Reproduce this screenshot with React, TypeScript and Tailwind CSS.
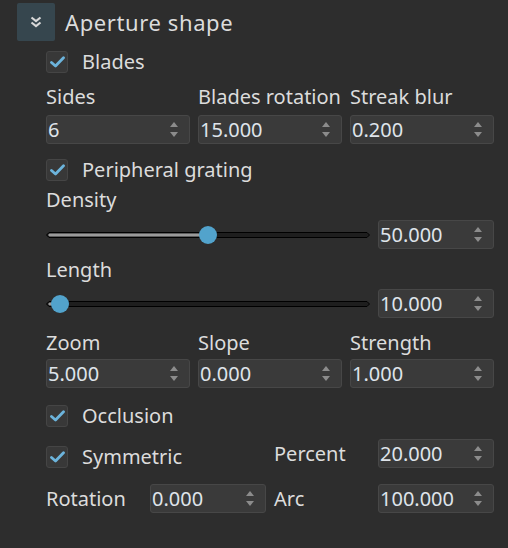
import React from "react";

const font = { fontFamily: '"Noto Sans", "Open Sans", sans-serif' };

function Spin({ value, w = "w-[144px]" }: { value: string; w?: string }) {
  return (
    <div
      className={`${w} h-[29px] shrink-0 rounded-[3px] border border-[#474747] bg-[#3a3a3a] flex items-center justify-between pl-[1px] pr-[11px]`}
    >
      <span className="text-[20px] leading-none text-[#dfe4ea]">{value}</span>
      <div className="flex flex-col items-center gap-[5px]">
        <svg width="8" height="5" viewBox="0 0 8 5">
          <path d="M4 0 L8 5 L0 5 Z" fill="#8c8c8c" />
        </svg>
        <svg width="8" height="5" viewBox="0 0 8 5">
          <path d="M0 0 L8 0 L4 5 Z" fill="#8c8c8c" />
        </svg>
      </div>
    </div>
  );
}

function Check({ label }: { label: string }) {
  return (
    <div className="flex items-center h-[22px]">
      <div className="w-[22px] h-[22px] rounded-[3px] border border-[#454545] bg-[#383838] flex items-center justify-center">
        <svg width="15" height="12" viewBox="0 0 15 12">
          <path d="M1.5 6.5 L5.5 10 L13.5 1.8" stroke="#6cb4dc" strokeWidth="2.8" fill="none" strokeLinecap="round" strokeLinejoin="round" />
        </svg>
      </div>
      <span className="ml-[14px] text-[20px] text-[#dcdcdc] leading-none">{label}</span>
    </div>
  );
}

function Slider({ pct }: { pct: number }) {
  const W = 324;
  const fillX = (W * pct) / 100;
  return (
    <div className="relative w-[324px] h-[20px] flex items-center">
      <svg width={W} height="8" viewBox={`0 0 ${W} 8`} className="block">
        <path
          d={`M0.5 4 L3 1.5 H${W - 3} L${W - 0.5} 4 L${W - 3} 6.5 H3 Z`}
          fill="#1e1e1e"
          stroke="#000000"
          strokeWidth="1"
        />
        <path d={`M2 4 L3.5 2.5 H${fillX} V5.5 H3.5 Z`} fill="#9a9a9a" />
      </svg>
      <div
        className="absolute top-[1px] w-[18px] h-[18px] rounded-full bg-[#52a3cc]"
        style={{ left: `${fillX - 9}px` }}
      />
    </div>
  );
}

function Label({ children }: { children: React.ReactNode }) {
  return <div className="text-[20px] leading-[24px] text-[#dcdcdc]">{children}</div>;
}

export default function App() {
  return (
    <div className="w-[508px] h-[548px] bg-[#2d2d2d] overflow-hidden" style={font}>
      <div className="pt-[3px] pl-[17px] flex items-center h-[41px]">
        <div className="w-[38px] h-[38px] rounded-[2px] bg-[#36464e] flex items-center justify-center">
          <svg width="12" height="12" viewBox="0 0 12 12">
            <path d="M1.5 1.5 L6 5 L10.5 1.5" stroke="#d8d8d8" strokeWidth="2.2" fill="none" />
            <path d="M1.5 6.5 L6 10 L10.5 6.5" stroke="#d8d8d8" strokeWidth="2.2" fill="none" />
          </svg>
        </div>
        <span className="ml-[10px] text-[22px] tracking-[0.6px] text-[#dcdcdc] leading-none">Aperture shape</span>
      </div>

      <div className="pl-[46px] flex flex-col">
        <div className="mt-[10px]">
          <Check label="Blades" />
        </div>
        <div className="mt-[12px] flex gap-[8px]">
          <div className="flex flex-col gap-[6px]">
            <Label>Sides</Label>
            <Spin value="6" />
          </div>
          <div className="flex flex-col gap-[6px]">
            <Label>Blades rotation</Label>
            <Spin value="15.000" />
          </div>
          <div className="flex flex-col gap-[6px]">
            <Label>Streak blur</Label>
            <Spin value="0.200" />
          </div>
        </div>

        <div className="mt-[15px]">
          <Check label="Peripheral grating" />
        </div>
        <div className="mt-[7px]">
          <Label>Density</Label>
        </div>
        <div className="mt-[8px] flex items-center gap-[8px]">
          <Slider pct={50} />
          <Spin value="50.000" w="w-[116px]" />
        </div>
        <div className="mt-[9px]">
          <Label>Length</Label>
        </div>
        <div className="mt-[7px] flex items-center gap-[8px]">
          <Slider pct={4.3} />
          <Spin value="10.000" w="w-[116px]" />
        </div>

        <div className="mt-[13px] flex gap-[8px]">
          <div className="flex flex-col gap-[4px]">
            <Label>Zoom</Label>
            <Spin value="5.000" />
          </div>
          <div className="flex flex-col gap-[4px]">
            <Label>Slope</Label>
            <Spin value="0.000" />
          </div>
          <div className="flex flex-col gap-[4px]">
            <Label>Strength</Label>
            <Spin value="1.000" />
          </div>
        </div>

        <div className="mt-[17px]">
          <Check label="Occlusion" />
        </div>

        <div className="mt-[12px] flex items-start h-[29px]">
          <div className="w-[228px] mt-[7px]">
            <Check label="Symmetric" />
          </div>
          <div className="w-[104px] mt-[3px]">
            <Label>Percent</Label>
          </div>
          <Spin value="20.000" w="w-[116px]" />
        </div>

        <div className="mt-[16px] flex items-center h-[29px]">
          <div className="w-[104px]">
            <Label>Rotation</Label>
          </div>
          <Spin value="0.000" w="w-[116px]" />
          <div className="ml-[8px] w-[104px]">
            <Label>Arc</Label>
          </div>
          <Spin value="100.000" w="w-[116px]" />
        </div>
      </div>
    </div>
  );
}
